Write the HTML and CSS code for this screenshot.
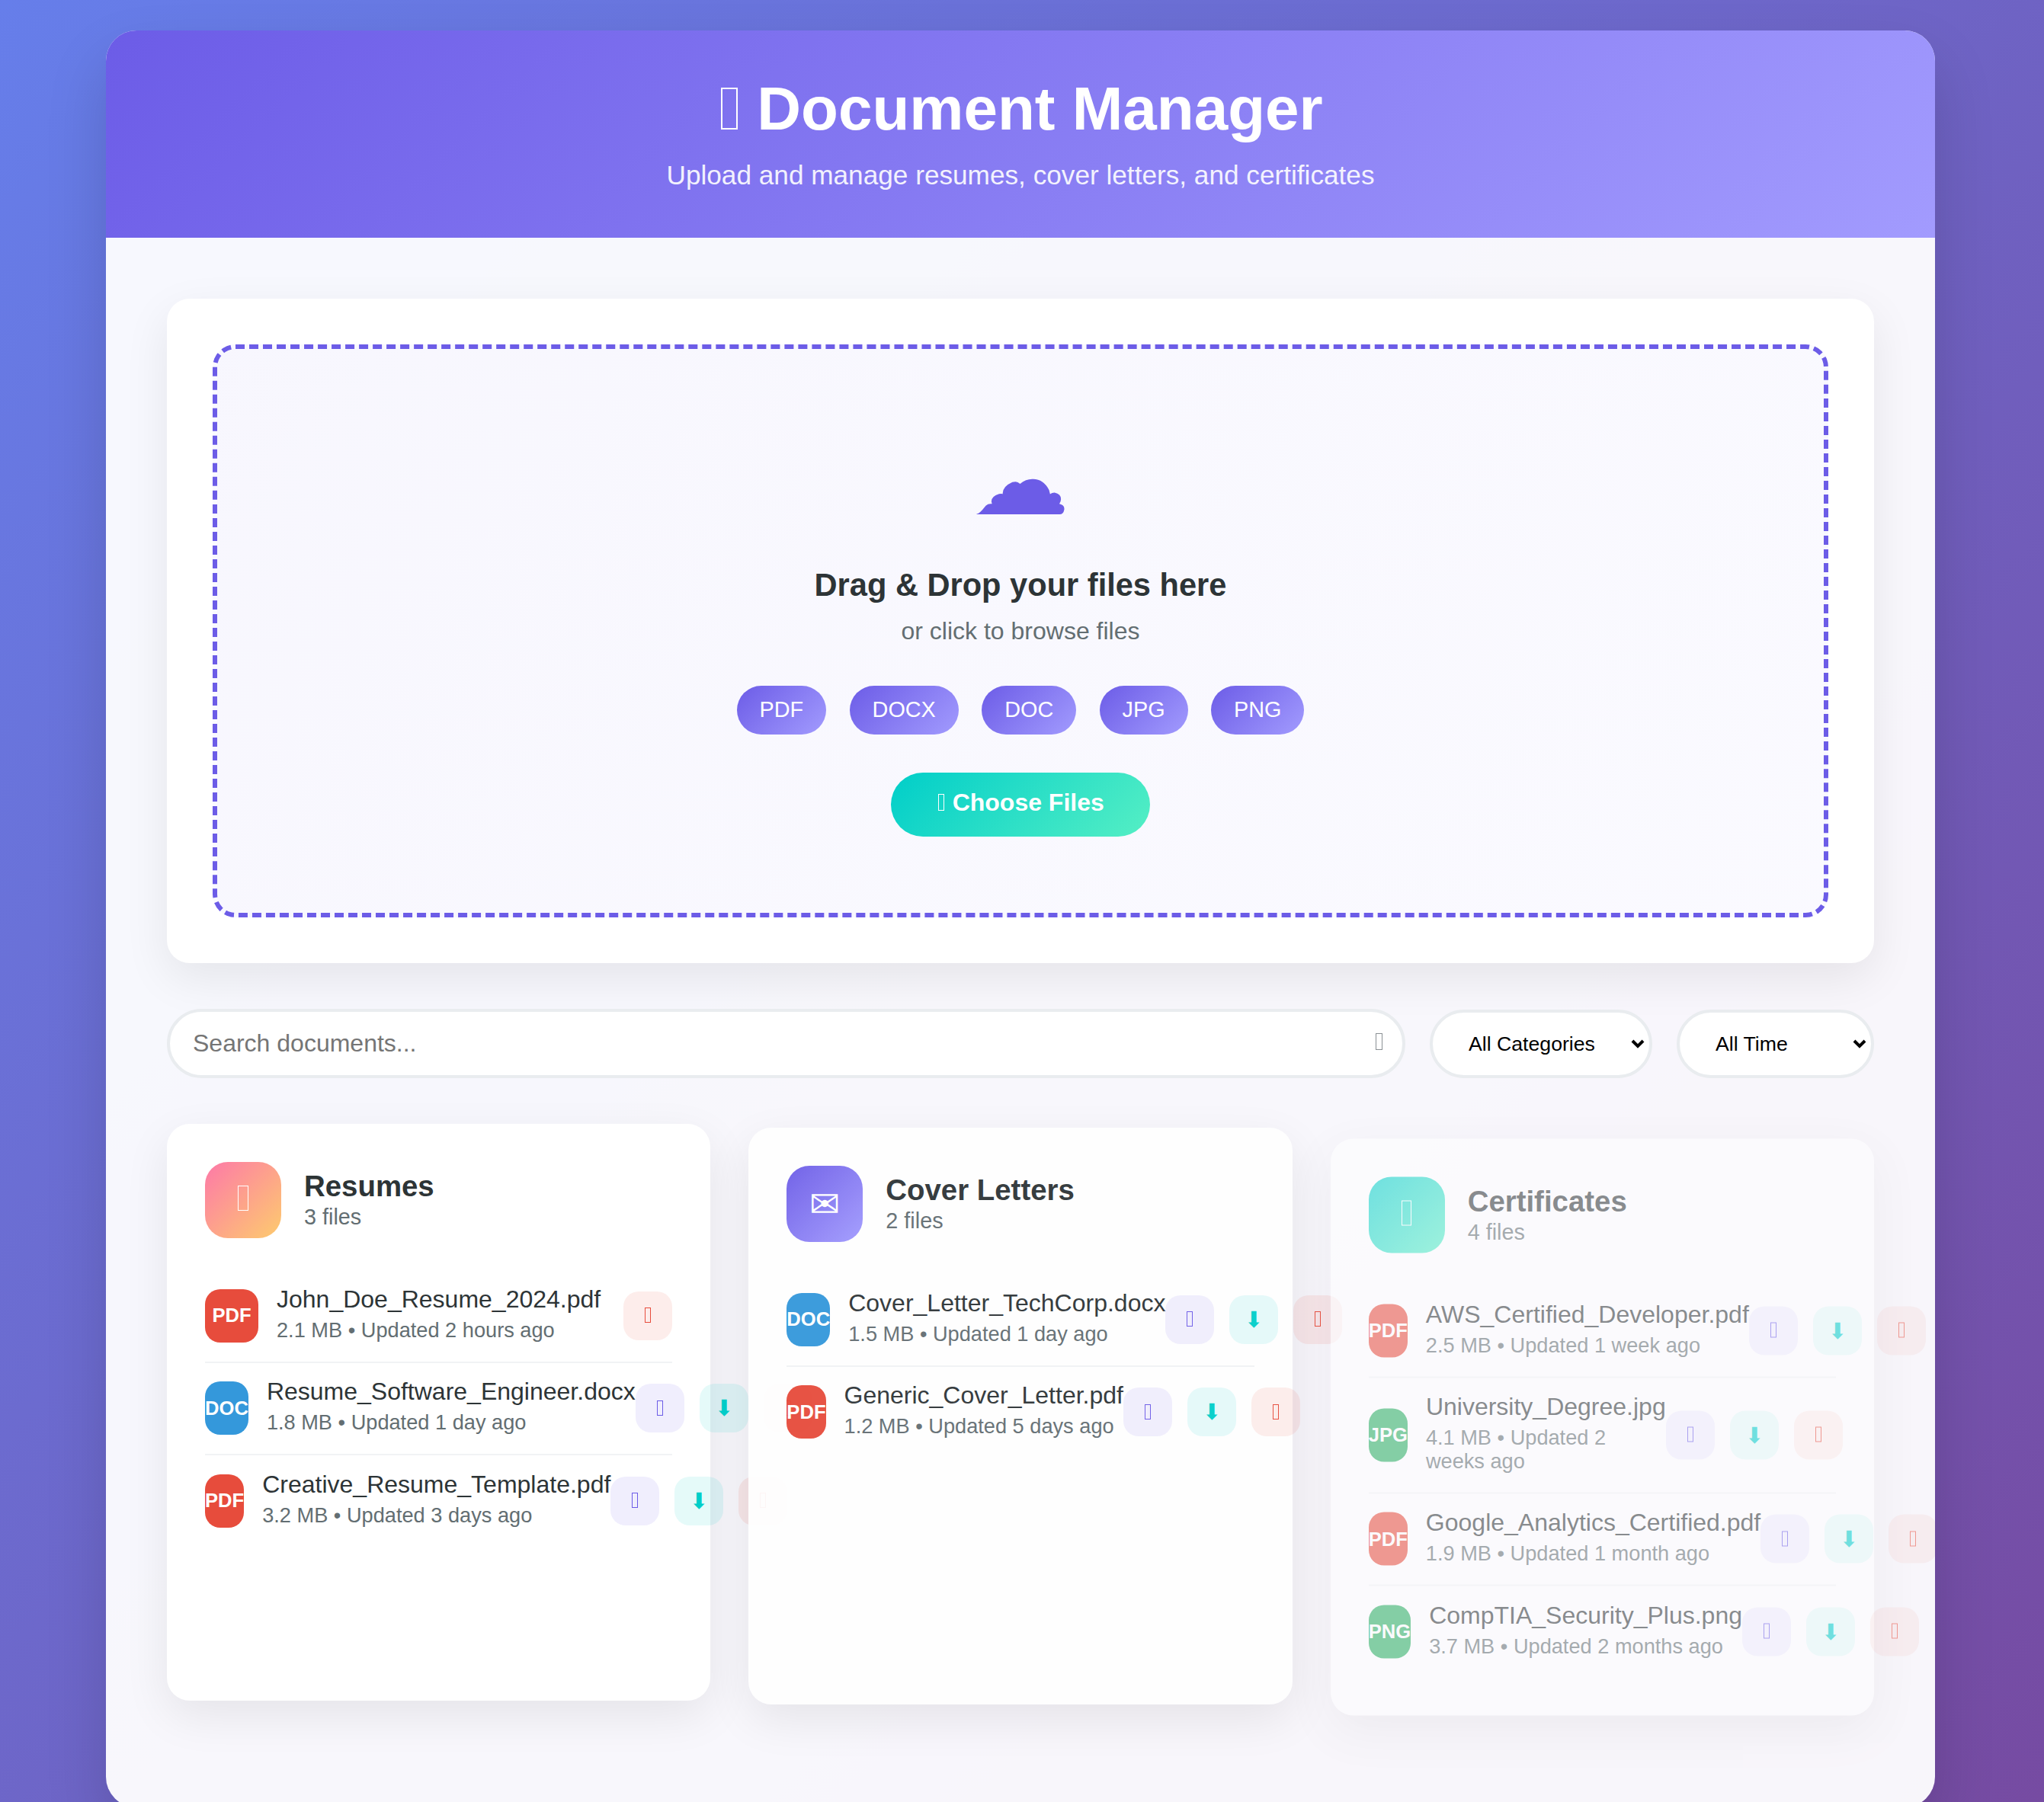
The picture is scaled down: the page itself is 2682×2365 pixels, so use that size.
FILE: index.html
```html
<!DOCTYPE html>
<html lang="en">
<head>
  <meta charset="UTF-8">
  <meta name="viewport" content="width=device-width, initial-scale=1.0">
  <title>Document Manager</title>
  <link rel="stylesheet" href="styles.css">
</head>
<body>
  <div class="container">
    <header class="header">
      <h1><span class="tofu"></span> Document Manager</h1>
      <p>Upload and manage resumes, cover letters, and certificates</p>
    </header>

    <main class="main">
      <section class="upload-section">
        <div class="upload-area">
          <div class="upload-icon">&#x2601;&#xFE0E;</div>
          <div class="upload-text">Drag &amp; Drop your files here</div>
          <div class="upload-subtext">or click to browse files</div>
          <div class="file-types">
            <span class="file-type">PDF</span>
            <span class="file-type">DOCX</span>
            <span class="file-type">DOC</span>
            <span class="file-type">JPG</span>
            <span class="file-type">PNG</span>
          </div>
          <button class="upload-btn"><span class="tofu"></span> Choose Files</button>
        </div>
      </section>

      <div class="search-filter">
        <div class="search-box">
          <input type="text" class="search-input" placeholder="Search documents...">
          <span class="search-icon"><span class="tofu"></span></span>
        </div>
        <select class="filter-select filter-category">
          <option>All Categories</option>
          <option>Resumes</option>
          <option>Cover Letters</option>
          <option>Certificates</option>
        </select>
        <select class="filter-select filter-time">
          <option>All Time</option>
          <option>This Week</option>
          <option>This Month</option>
        </select>
      </div>

      <div class="categories">
        <section class="category-card">
          <div class="category-header">
            <div class="category-icon icon-resumes"><span class="tofu"></span></div>
            <div>
              <div class="category-title">Resumes</div>
              <div class="category-count">3 files</div>
            </div>
          </div>
          <div class="file-list">
            <div class="file-item">
              <div class="file-icon pdf">PDF</div>
              <div class="file-info">
                <div class="file-name">John_Doe_Resume_2024.pdf</div>
                <div class="file-meta">2.1 MB • Updated 2 hours ago</div>
              </div>
              <div class="file-actions">
                <button class="action-btn delete-btn"><span class="tofu"></span></button>
              </div>
            </div>
            <div class="file-item">
              <div class="file-icon doc">DOC</div>
              <div class="file-info">
                <div class="file-name">Resume_Software_Engineer.docx</div>
                <div class="file-meta">1.8 MB • Updated 1 day ago</div>
              </div>
              <div class="file-actions">
                <button class="action-btn view-btn"><span class="tofu"></span></button>
                <button class="action-btn download-btn">&#x2B07;&#xFE0E;</button>
                <button class="action-btn delete-btn"><span class="tofu"></span></button>
              </div>
            </div>
            <div class="file-item">
              <div class="file-icon pdf">PDF</div>
              <div class="file-info">
                <div class="file-name">Creative_Resume_Template.pdf</div>
                <div class="file-meta">3.2 MB • Updated 3 days ago</div>
              </div>
              <div class="file-actions">
                <button class="action-btn view-btn"><span class="tofu"></span></button>
                <button class="action-btn download-btn">&#x2B07;&#xFE0E;</button>
                <button class="action-btn delete-btn"><span class="tofu"></span></button>
              </div>
            </div>
          </div>
        </section>

        <section class="category-card card-second">
          <div class="category-header">
            <div class="category-icon icon-letters">&#x2709;&#xFE0E;</div>
            <div>
              <div class="category-title">Cover Letters</div>
              <div class="category-count">2 files</div>
            </div>
          </div>
          <div class="file-list">
            <div class="file-item">
              <div class="file-icon doc">DOC</div>
              <div class="file-info">
                <div class="file-name">Cover_Letter_TechCorp.docx</div>
                <div class="file-meta">1.5 MB • Updated 1 day ago</div>
              </div>
              <div class="file-actions">
                <button class="action-btn view-btn"><span class="tofu"></span></button>
                <button class="action-btn download-btn">&#x2B07;&#xFE0E;</button>
                <button class="action-btn delete-btn"><span class="tofu"></span></button>
              </div>
            </div>
            <div class="file-item">
              <div class="file-icon pdf">PDF</div>
              <div class="file-info">
                <div class="file-name">Generic_Cover_Letter.pdf</div>
                <div class="file-meta">1.2 MB • Updated 5 days ago</div>
              </div>
              <div class="file-actions">
                <button class="action-btn view-btn"><span class="tofu"></span></button>
                <button class="action-btn download-btn">&#x2B07;&#xFE0E;</button>
                <button class="action-btn delete-btn"><span class="tofu"></span></button>
              </div>
            </div>
          </div>
        </section>

        <section class="category-card card-third">
          <div class="category-header">
            <div class="category-icon icon-certs"><span class="tofu"></span></div>
            <div>
              <div class="category-title">Certificates</div>
              <div class="category-count">4 files</div>
            </div>
          </div>
          <div class="file-list">
            <div class="file-item">
              <div class="file-icon pdf">PDF</div>
              <div class="file-info">
                <div class="file-name">AWS_Certified_Developer.pdf</div>
                <div class="file-meta">2.5 MB • Updated 1 week ago</div>
              </div>
              <div class="file-actions">
                <button class="action-btn view-btn"><span class="tofu"></span></button>
                <button class="action-btn download-btn">&#x2B07;&#xFE0E;</button>
                <button class="action-btn delete-btn"><span class="tofu"></span></button>
              </div>
            </div>
            <div class="file-item">
              <div class="file-icon img">JPG</div>
              <div class="file-info">
                <div class="file-name">University_Degree.jpg</div>
                <div class="file-meta">4.1 MB • Updated 2 weeks ago</div>
              </div>
              <div class="file-actions">
                <button class="action-btn view-btn"><span class="tofu"></span></button>
                <button class="action-btn download-btn">&#x2B07;&#xFE0E;</button>
                <button class="action-btn delete-btn"><span class="tofu"></span></button>
              </div>
            </div>
            <div class="file-item">
              <div class="file-icon pdf">PDF</div>
              <div class="file-info">
                <div class="file-name">Google_Analytics_Certified.pdf</div>
                <div class="file-meta">1.9 MB • Updated 1 month ago</div>
              </div>
              <div class="file-actions">
                <button class="action-btn view-btn"><span class="tofu"></span></button>
                <button class="action-btn download-btn">&#x2B07;&#xFE0E;</button>
                <button class="action-btn delete-btn"><span class="tofu"></span></button>
              </div>
            </div>
            <div class="file-item">
              <div class="file-icon img">PNG</div>
              <div class="file-info">
                <div class="file-name">CompTIA_Security_Plus.png</div>
                <div class="file-meta">3.7 MB • Updated 2 months ago</div>
              </div>
              <div class="file-actions">
                <button class="action-btn view-btn"><span class="tofu"></span></button>
                <button class="action-btn download-btn">&#x2B07;&#xFE0E;</button>
                <button class="action-btn delete-btn"><span class="tofu"></span></button>
              </div>
            </div>
          </div>
        </section>
      </div>
    </main>
  </div>
</body>
</html>
```
FILE: styles.css
```css
* {
  margin: 0;
  padding: 0;
  box-sizing: border-box;
}
html, body {
  height: 100vh;
  overflow: hidden;
}
body {
  font-family: "Liberation Sans", sans-serif;
  background: linear-gradient(135deg, #667eea 0%, #764ba2 100%);
  padding: 40px 143px 0 139px;
  color: #2d3436;
}
.container {
  width: 2400px;
  height: 2332px;
  background: rgba(255, 255, 255, 0.95);
  border-radius: 40px;
  box-shadow: 0 40px 80px rgba(0, 0, 0, 0.15);
  overflow: hidden;
}

/* the hollow box the reference shows where an emoji has no font */
.tofu {
  display: inline-block;
  width: 0.275em;
  height: 0.69em;
  margin: 0 0.0425em;
  border: 0.035em solid currentColor;
}

/* header */
.header {
  background: linear-gradient(135deg, #6c5ce7, #a29bfe);
  color: white;
  text-align: center;
  padding: 57px 60px;
  height: 272px;
}
.header h1 {
  font-size: 80px;
  font-weight: 700;
  margin-bottom: 21px;
}
.header p {
  font-size: 35.2px;
  opacity: 0.9;
}
.main {
  padding: 80px;
}

/* upload */
.upload-section {
  background: white;
  border-radius: 30px;
  padding: 60px;
  margin-bottom: 60px;
  box-shadow: 0 20px 60px rgba(0, 0, 0, 0.08);
}
.upload-area {
  height: 752px;
  border: 6px dashed #6c5ce7;
  border-radius: 30px;
  background: linear-gradient(135deg, rgba(108, 92, 231, 0.05), rgba(162, 155, 254, 0.05));
  padding: 98px 60px 0;
  text-align: center;
}
.upload-icon {
  font-family: "DejaVu Sans", sans-serif;
  font-size: 128px;
  line-height: 150px;
  color: #6c5ce7;
  margin-bottom: 38px;
}
.upload-text {
  font-size: 41.6px;
  font-weight: 700;
  margin-bottom: 18px;
}
.upload-subtext {
  font-size: 32px;
  color: #636e72;
  margin-bottom: 53px;
}
.file-types {
  display: flex;
  justify-content: center;
  gap: 30.4px;
  margin-bottom: 50px;
}
.file-type {
  font-size: 28.8px;
  line-height: 32px;
  padding: 15px 30px 17px;
  border-radius: 40px;
  color: white;
  background: linear-gradient(135deg, #6c5ce7, #a29bfe);
}
.upload-btn {
  font-family: inherit;
  font-size: 32px;
  font-weight: 700;
  line-height: 36px;
  color: white;
  padding: 21px 60px 27px;
  border: none;
  border-radius: 50px;
  background: linear-gradient(135deg, #00cec9, #55efc4);
}

/* search and filters */
.search-filter {
  display: flex;
  gap: 32px;
  align-items: center;
  margin-bottom: 60px;
}
.search-box {
  flex: 1;
  position: relative;
}
.search-input {
  width: 100%;
  font-family: inherit;
  font-size: 32px;
  padding: 23px 30px;
  border: 4px solid #e9ecef;
  border-radius: 50px;
  background: white;
  outline: none;
}
.search-icon {
  position: absolute;
  right: 29px;
  top: 25px;
  font-size: 32px;
  color: #8a9094;
}
.filter-select {
  appearance: none;
  font-family: inherit;
  font-size: 26.67px;
  height: 90px;
  padding: 0 8px 0 47px;
  border: 4px solid #e9ecef;
  border-radius: 50px;
  background: white url("data:image/svg+xml,%3Csvg xmlns='http://www.w3.org/2000/svg' width='18' height='12' viewBox='0 0 18 12'%3E%3Cpath d='M2 2l7 7 7-7' fill='none' stroke='black' stroke-width='4'/%3E%3C/svg%3E") no-repeat right 6px center;
  color: black;
}
.filter-category {
  width: 292px;
}
.filter-time {
  width: 259px;
}

/* category cards */
.categories {
  display: grid;
  grid-template-columns: repeat(3, minmax(0, 1fr));
  gap: 50px;
}
.category-card {
  background: white;
  border-radius: 30px;
  padding: 50px;
  box-shadow: 0 20px 60px rgba(0, 0, 0, 0.08);
}
.card-second {
  opacity: 0.95;
  transform: translateY(5px);
}
.card-third {
  opacity: 0.55;
  transform: translateY(19.5px);
}
.category-header {
  display: flex;
  align-items: center;
  gap: 30px;
  margin-bottom: 42px;
}
.category-icon {
  width: 100px;
  height: 100px;
  border-radius: 30px;
  display: flex;
  align-items: center;
  justify-content: center;
  font-size: 48px;
  color: white;
}
.category-icon .tofu {
  margin-bottom: 5px;
}
.icon-resumes {
  background: linear-gradient(135deg, #fd79a8, #fdcb6e);
}
.icon-letters {
  background: linear-gradient(135deg, #6c5ce7, #a29bfe);
}
.icon-certs {
  background: linear-gradient(135deg, #00cec9, #55efc4);
}
.category-title {
  font-size: 38.4px;
  font-weight: 700;
  margin-bottom: 2px;
}
.category-count {
  font-size: 28.8px;
  color: #636e72;
  margin-bottom: 2px;
}

/* file rows */
.file-item {
  display: flex;
  align-items: center;
  padding: 19.5px 0;
  border-bottom: 2px solid #f1f3f5;
}
.file-item:last-child {
  border-bottom: none;
}
.file-icon {
  width: 70px;
  height: 70px;
  margin-right: 24px;
  border-radius: 20px;
  display: flex;
  align-items: center;
  justify-content: center;
  font-size: 25.6px;
  font-weight: 700;
  color: white;
}
.pdf {
  background: #e74c3c;
}
.doc {
  background: #3498db;
}
.img {
  background: #27ae60;
}
.file-info {
  flex-grow: 1;
  padding-bottom: 6px;
}
.file-name {
  font-size: 32px;
  margin-bottom: 7px;
}
.file-meta {
  font-size: 27.2px;
  line-height: 30.5px;
  color: #636e72;
}
.file-actions {
  display: flex;
  gap: 20px;
}
.action-btn {
  width: 64px;
  height: 64px;
  border: none;
  border-radius: 20px;
  font-family: inherit;
  font-size: 28.8px;
}
.view-btn {
  background: rgba(108, 92, 231, 0.1);
  color: #6c5ce7;
}
.download-btn {
  background: rgba(0, 206, 201, 0.1);
  color: #00cec9;
}
.delete-btn {
  background: rgba(231, 76, 60, 0.1);
  color: #e74c3c;
}
```
